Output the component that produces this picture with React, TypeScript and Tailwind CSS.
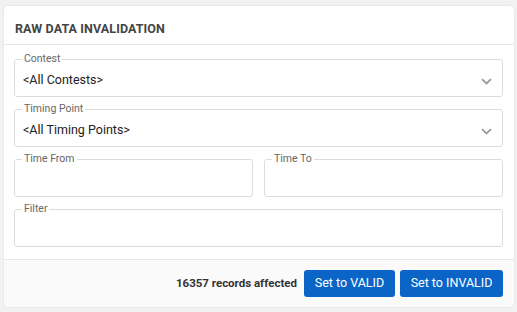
import React from "react";

function Field({ label, value, select, className = "" }: { label: string; value?: string; select?: boolean; className?: string }) {
  return (
    <fieldset className={`relative h-[43px] rounded-[3px] border border-[#dcdcdc] px-[8px] ${className}`}>
      <legend className="ml-[-1px] px-[2px] text-[10.5px] leading-[10px] text-[#666]">{label}</legend>
      <div className="mt-[8px] text-[12.5px] leading-[16px] text-[#222]">{value}</div>
      {select && (
        <svg className="absolute right-[10px] top-[14px]" width="11" height="7" viewBox="0 0 11 7">
          <path d="M1 1.2 L5.5 5.5 L10 1.2" fill="none" stroke="#9a9a9a" strokeWidth="1.8" />
        </svg>
      )}
    </fieldset>
  );
}

export default function App() {
  return (
    <div className="h-[312px] w-[517px] bg-[#f2f2f2] pt-[6px] pl-[4px] pr-[3px]" style={{ fontFamily: "Roboto, 'Noto Sans', sans-serif" }}>
      <div className="h-[301px] overflow-hidden rounded-[4px] bg-white shadow-[0_0_2px_rgba(0,0,0,0.12)]">
        <div className="flex h-[39px] items-end border-b border-[#e6e6e6] px-[11px] pb-[5px]">
          <div className="text-[12.5px] font-bold tracking-[0.1px] text-[#444]">RAW DATA INVALIDATION</div>
        </div>
        <div className="flex flex-col gap-[7px] pl-[10px] pr-[11px] pt-[9px] pb-[12px]">
          <Field label="Contest" value="<All Contests>" select />
          <Field label="Timing Point" value="<All Timing Points>" select />
          <div className="flex gap-[11px]">
            <Field label="Time From" className="flex-1" />
            <Field label="Time To" className="flex-1" />
          </div>
          <Field label="Filter" />
        </div>
        <div className="flex h-[48px] items-center justify-end gap-[5px] border-t border-[#e6e6e6] bg-[#fafafa] pl-[10px] pr-[11px]">
          <span className="mr-[2px] text-[11.5px] font-bold text-[#333]">16357 records affected</span>
          <button className="h-[27px] w-[91px] rounded-[3px] bg-[#0b65c6] text-[12.5px] text-white">Set to VALID</button>
          <button className="h-[27px] w-[103px] rounded-[3px] bg-[#0b65c6] text-[12.5px] text-white">Set to INVALID</button>
        </div>
      </div>
    </div>
  );
}
